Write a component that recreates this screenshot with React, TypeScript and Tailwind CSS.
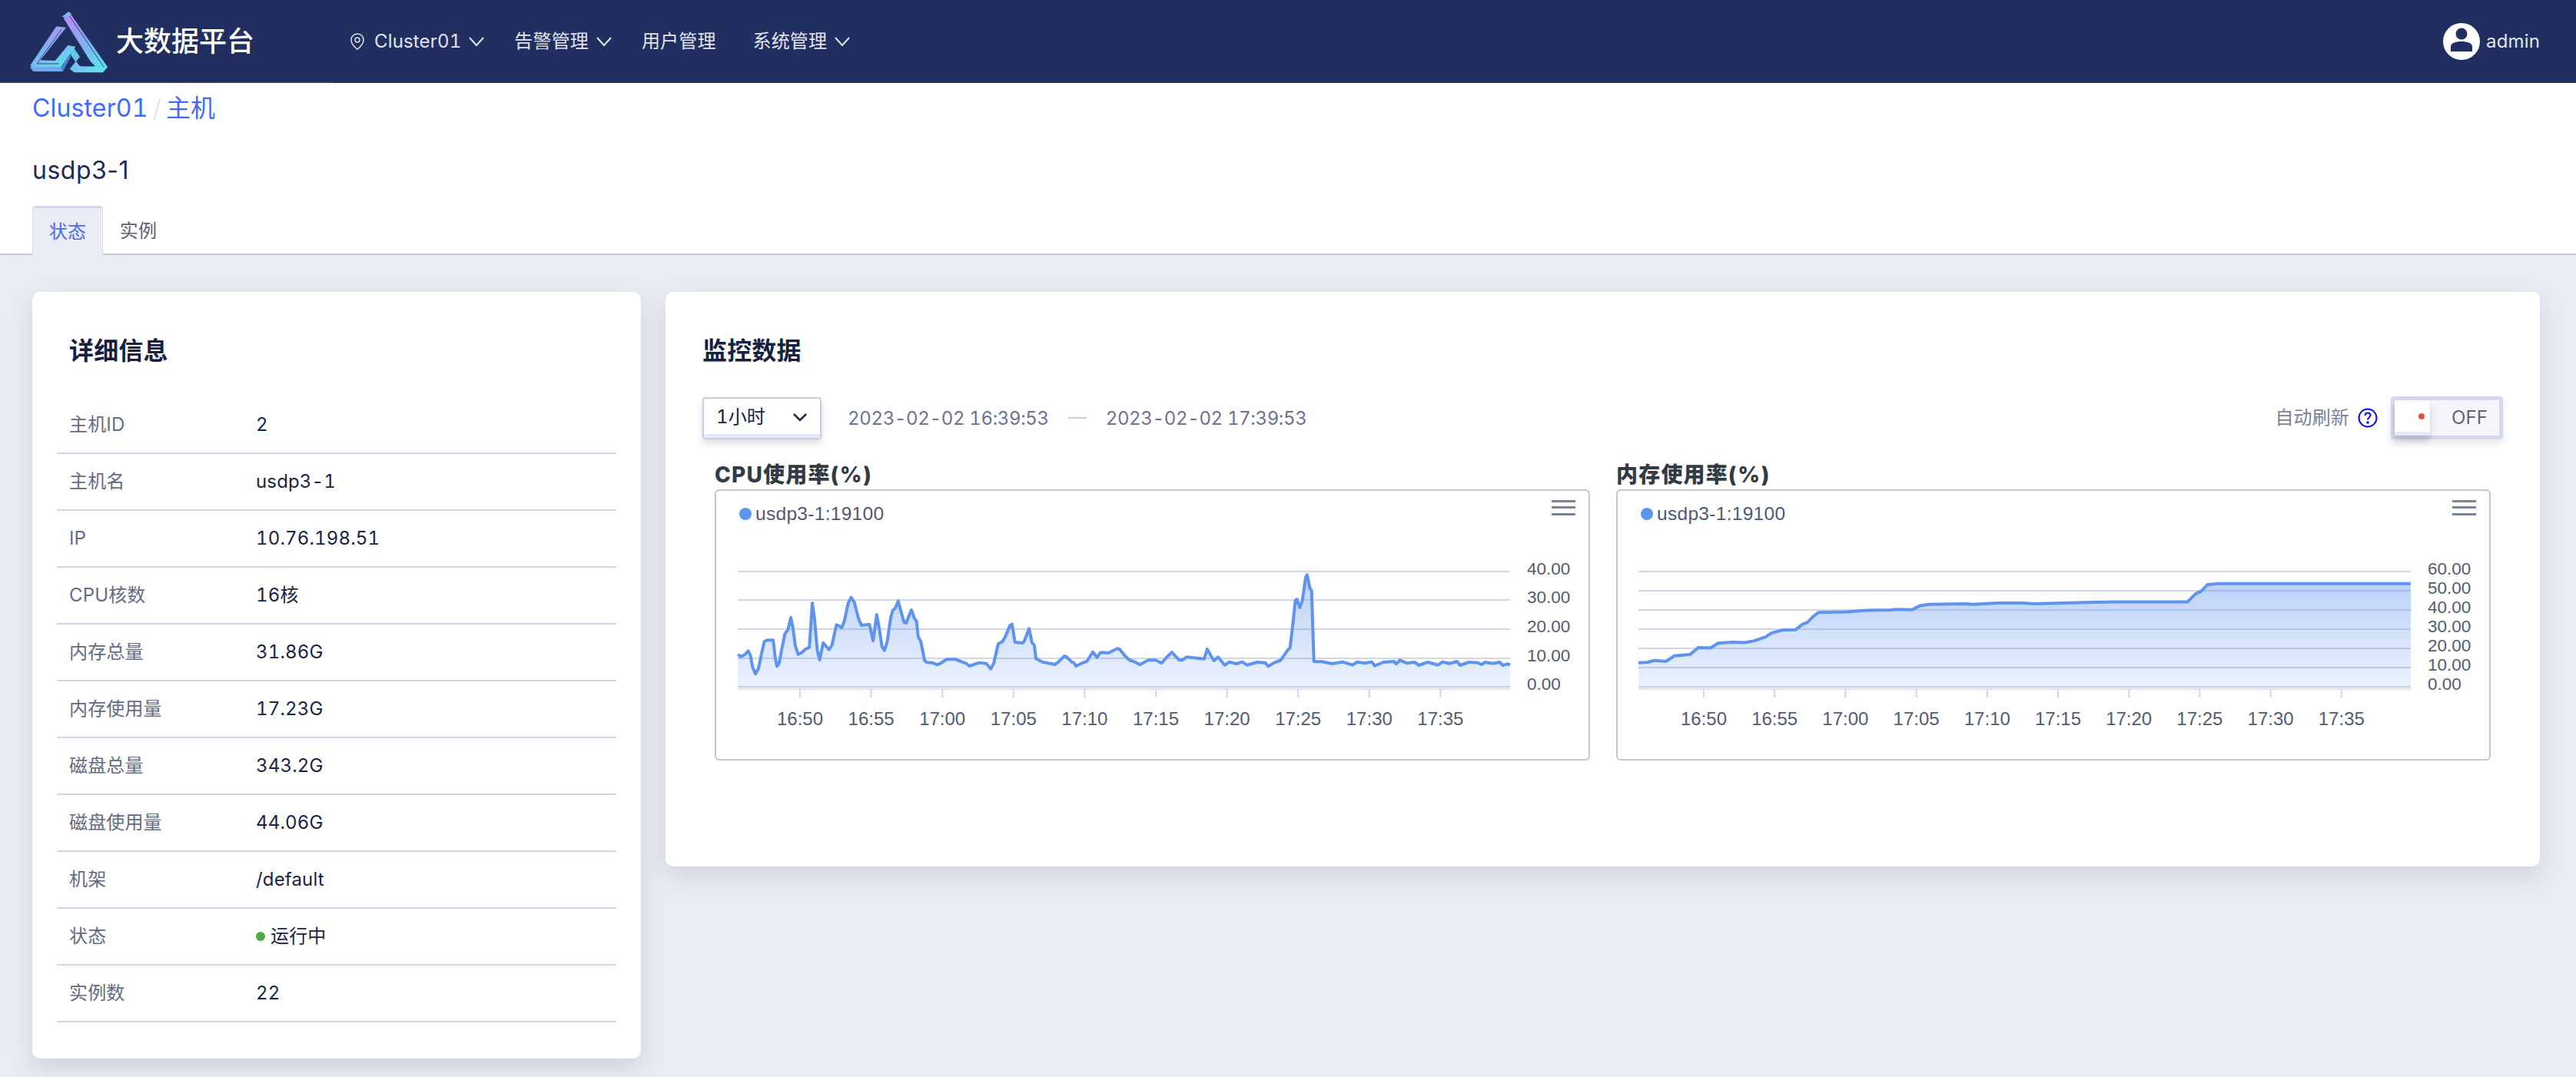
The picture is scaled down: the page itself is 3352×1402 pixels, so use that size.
import { MapPin } from "lucide-react";

type Pt = [number, number];

// line points read off the screenshot, page coordinates after the map
const cpuLeft: Pt[] = ([
  [105,575],[115,585],[130,575],[140,562],[148,580],[155,625],[165,652],[175,630],[185,575],[195,525],[205,520],[225,520],[232,590],[238,622],[245,610],[255,550],[265,495],[275,480],[285,432],[292,470],[300,540],[310,575],[320,570],[335,555],[348,548],[358,375],[365,430],[375,560],[383,597],[395,530],[415,557],[425,540],[440,460],[450,465],[458,472],[467,445],[480,375],[490,353],[500,370],[515,435],[525,462],[552,458],[565,522],[577,420],[585,470],[595,545],[603,560],[612,530],[625,430],[632,403],[640,395],[650,367],[660,410],[670,450],[677,453],[695,402],[705,435],[712,445],[718,507],[727,525],[740,600],[747,607],[765,608],[782,616],[795,610],[815,595],[845,595],[880,610],[892,621],[925,608],[950,611],[965,632],[975,610],[990,535],[1005,525],[1015,505],[1030,462],[1037,458],[1047,528],[1072,531],[1078,525],[1095,475],[1105,530],[1113,540],[1118,592],[1140,605],[1183,615],[1195,605],[1215,582],[1222,585],[1240,605],[1247,608],[1255,621],[1275,610],[1292,602],[1312,566],[1326,587],[1338,568],[1365,570],[1395,553],[1403,555],[1420,580],[1435,597],[1455,605],[1472,616],[1500,598],
] as Pt[]).map(([x, y]) => [920 + x / 2.613, 660 + y / 3]);

const cpuRight: Pt[] = ([
  [10,598],[30,610],[45,590],[65,567],[75,580],[90,597],[100,598],[115,586],[175,593],[185,555],[195,575],[208,600],[222,586],[245,618],[260,605],[285,612],[305,605],[320,617],[355,606],[382,608],[393,622],[415,607],[435,598],[458,560],[467,550],[475,470],[485,365],[490,360],[500,392],[508,370],[520,275],[525,265],[535,320],[540,325],[548,603],[575,604],[610,612],[645,605],[680,617],[695,605],[720,610],[745,605],[755,620],[785,606],[820,603],[828,613],[840,598],[865,610],[890,606],[905,618],[935,606],[970,617],[985,605],[1010,611],[1035,603],[1045,618],[1075,606],[1105,608],[1118,615],[1130,606],[1155,611],[1180,606],[1190,618],[1205,613],[1215,616],
] as Pt[]).map(([x, y]) => [1500 + x / 2.613, 660 + y / 3]);

const memLine: Pt[] = ([
  [64,913],[78,912],[90,906],[108,909],[122,891],[147,887],[160,865],[180,866],[192,851],[215,848],[235,849],[250,843],[268,831],[278,818],[295,809],[316,808],[328,790],[335,785],[345,765],[353,753],[400,751],[430,746],[470,745],[478,743],[503,744],[516,731],[530,727],[590,725],[600,727],[640,723],[680,723],[700,725],[780,721],[830,719],[945,719],[958,693],[967,685],[977,664],[995,661],[1303,661],
] as Pt[]).map(([x, y]) => [2080 + x / 1.233, 490 + y / 2.45]);

const times = ["16:50","16:55","17:00","17:05","17:10","17:15","17:20","17:25","17:30","17:35"];

const details = [
  ["主机ID", "2"],
  ["主机名", "usdp3-1"],
  ["IP", "10.76.198.51"],
  ["CPU核数", "16核"],
  ["内存总量", "31.86G"],
  ["内存使用量", "17.23G"],
  ["磁盘总量", "343.2G"],
  ["磁盘使用量", "44.06G"],
  ["机架", "/default"],
  ["状态", "运行中"],
  ["实例数", "22"],
];

function Chevron() {
  return (
    <svg width="22" height="14" viewBox="0 0 22 14" fill="none" stroke="#e4e6f0" strokeWidth="2">
      <polyline points="2,2 11,12 20,2" />
    </svg>
  );
}

function Logo() {
  return (
    <svg width="120" height="90" viewBox="0 0 360 270">
      <defs>
        <linearGradient id="logoGrad" x1="0.2" y1="0" x2="0.85" y2="1">
          <stop offset="0" stopColor="#b78cf4" />
          <stop offset="0.5" stopColor="#7eb2f2" />
          <stop offset="1" stopColor="#5de6ee" />
        </linearGradient>
      </defs>
      <polygon points="152,38 178,18 190,28 165,42" fill="#6fc0ee" />
      <polygon points="158,44 185,27 330,235 312,256 200,256 182,242 207,212 222,232 275,232" fill="url(#logoGrad)" />
      <polygon points="28,228 130,76 168,80 68,208 125,210 175,150 205,155 148,235 35,235" fill="url(#logoGrad)" />
      <polygon points="26,234 148,234 156,252 40,252" fill="#74a6ec" />
      <polygon points="148,234 182,185 187,193 156,252" fill="#3f87c4" />
      <polygon points="195,155 222,195 205,215 185,185" fill="#5ec9ee" />
      <polygon points="222,212 262,212 282,232 235,232" fill="#1f2e5e" />
      <line x1="182" y1="36" x2="316" y2="236" stroke="#1f2e5e" strokeWidth="2.5" />
      <line x1="150" y1="88" x2="54" y2="222" stroke="#1f2e5e" strokeWidth="2.5" />
      <line x1="54" y1="222" x2="140" y2="222" stroke="#1f2e5e" strokeWidth="2.5" />
    </svg>
  );
}

function NavItem({ label, arrow = true }: { label: string; arrow?: boolean }) {
  return (
    <div className="flex items-center gap-[9px] text-[24px] text-[#e1e3ee]">
      <span>{label}</span>
      {arrow && <Chevron />}
    </div>
  );
}

function path(points: Pt[]) {
  return points.map(([x, y], i) => `${i ? "L" : "M"}${x.toFixed(1)} ${y.toFixed(1)}`).join(" ");
}

function ChartPlot(props: {
  id: string;
  x0: number;
  x1: number;
  left: number;
  points: Pt[];
  grid: number[];
  yLabels: string[];
  labelX: number;
  firstTick: number;
  tickStep: number;
}) {
  const { id, x0, x1, left, points, grid, yLabels, labelX, firstTick, tickStep } = props;
  const area = `${path(points)} L${x1} ${points[points.length - 1][1]} L${x1} 896 L${x0} 896 Z`;
  return (
    <svg width={left} height="287" viewBox={`${x0 - (id === "cpu" ? 28 : 27)} 700 ${left} 287`} className="block">
      <defs>
        <linearGradient id={id} x1="0" y1="0" x2="0" y2="1">
          <stop offset="0" stopColor="#5f94ee" stopOpacity="0.42" />
          <stop offset="1" stopColor="#5f94ee" stopOpacity="0.12" />
        </linearGradient>
      </defs>
      {grid.map((y) => (
        <line key={y} x1={x0} x2={x1} y1={y} y2={y} stroke="#d3d6e8" strokeWidth="2" />
      ))}
      <line x1={x0} x2={x1} y1="897" y2="897" stroke="#dfe2ee" strokeWidth="2" />
      <path d={area} fill={`url(#${id})`} />
      <path d={path(points)} fill="none" stroke="#5f94ee" strokeWidth="4" strokeLinejoin="round" />
      {times.map((t, i) => {
        const x = firstTick + tickStep * i;
        return (
          <g key={t}>
            <line x1={x} x2={x} y1="897" y2="908" stroke="#d3d6e8" strokeWidth="2" />
            <text x={x} y="944" textAnchor="middle" fontFamily="'Liberation Sans', sans-serif" fontSize="24" letterSpacing="0" fill="#535b70">
              {t}
            </text>
          </g>
        );
      })}
      {yLabels.map((label, i) => (
        <text key={label} x={labelX} y={grid[i] + 4} fontFamily="'Liberation Sans', sans-serif" fontSize="22.5" letterSpacing="0" fill="#535b70">
          {label}
        </text>
      ))}
    </svg>
  );
}

function ChartBox({ title, children }: { title: string; children: React.ReactNode }) {
  return (
    <div>
      <div className="h-[37px] text-[28px] leading-[37px] font-extrabold tracking-[1.2px] text-[#333a45]">{title}</div>
      <div className="h-[353px] rounded-[6px] border-2 border-[#c4c6cc] bg-white">
        <div className="flex h-[61px] items-start justify-between pt-[12px] pr-[17px] pl-[30px]">
          <div className="flex h-[36px] items-center gap-[5px] font-['Liberation_Sans',sans-serif] text-[24.5px] tracking-[0.3px] text-[#4f5870]">
            <span className="h-[16px] w-[16px] rounded-full bg-[#5f94ee]" />
            usdp3-1:19100
          </div>
          <svg width="31" height="20" viewBox="0 0 31 20" fill="#78849a">
            <rect y="0" width="31" height="3" />
            <rect y="8" width="31" height="3" />
            <rect y="17" width="31" height="3" />
          </svg>
        </div>
        {children}
      </div>
    </div>
  );
}

export default function App() {
  return (
    <div className="min-h-screen bg-[#eaecf4] font-['Inter','Noto_Sans_CJK_SC',sans-serif] tracking-[0.15px] tabular-nums">
      <header className="relative flex h-[108px] items-center bg-[#212f60]">
        <div className="absolute bottom-0 left-0 h-[2px] w-[434px] bg-[#2f3d6e]" />
        <div className="ml-[30px] flex items-center">
          <Logo />
          <span className="ml-[1px] text-[36px] font-medium tracking-normal text-white">大数据平台</span>
        </div>
        <nav className="ml-[122px] flex items-center gap-[38px]">
          <div className="flex items-center gap-[10px] text-[#e1e3ee]">
            <MapPin size={24} strokeWidth={1.5} />
            <NavItem label="Cluster01" />
          </div>
          <NavItem label="告警管理" />
          <NavItem label="用户管理" arrow={false} />
          <div className="ml-[10px]">
            <NavItem label="系统管理" />
          </div>
        </nav>
        <div className="mr-[47px] ml-auto flex items-center gap-[8px]">
          <svg width="48" height="48" viewBox="0 0 48 48">
            <circle cx="24" cy="24" r="24" fill="#fff" />
            <circle cx="24" cy="14" r="7.5" fill="#212f60" />
            <path d="M10 37 V31 C10 26 16 24 24 24 C32 24 38 26 38 31 V37 Z" fill="#212f60" />
          </svg>
          <span className="text-[24px] text-[#e1e3ee]">admin</span>
        </div>
      </header>

      <section className="bg-white">
        <div className="flex h-[64px] items-center gap-[6px] pt-[2px] pl-[42px] text-[32px] text-[#3d6bff]">
          <span>Cluster01</span>
          <span className="font-light text-[#dfe1ea]">/</span>
          <span>主机</span>
        </div>
        <div className="mt-[26px] flex h-[48px] items-center pl-[42px] text-[32px] tracking-[0.5px] text-[#1f2a55] normal-nums">usdp3-1</div>
        <div className="mt-[22px] flex h-[64px] border-b-2 border-[#c6cbdc] pl-[42px] text-[24px]">
          <div className="-mb-[2px] flex h-[64px] w-[92px] items-center justify-center rounded-t-[4px] border-x border-t-[3px] border-[#d3d7e6] bg-[#e9ebf5] text-[#4a6cf0]">
            状态
          </div>
          <div className="flex w-[92px] items-center justify-center pt-[3px] text-[#5a6378]">实例</div>
        </div>
      </section>

      <main className="flex items-start gap-[32px] pt-[48px] pr-[47px] pb-[24px] pl-[42px]">
        <aside className="w-[792px] shrink-0 rounded-[10px] bg-white px-[32px] pt-[53px] pb-[47px] shadow-[0_12px_30px_rgba(60,70,110,0.16)]">
          <h2 className="mb-[36px] h-[48px] pl-[16px] text-[32px] leading-[48px] font-bold text-[#16213f]">详细信息</h2>
          {details.map(([label, value]) => (
            <div key={label} className="flex h-[74px] items-center border-b-2 border-[#d3d6e8] pl-[16px] text-[24px]">
              <span className="w-[243px] text-[#636b85]">{label}</span>
              <span className="flex items-center gap-[7px] text-[#1a2444]">
                {label === "状态" && <span className="h-[12px] w-[12px] rounded-full bg-[#4caf45]" />}
                {value}
              </span>
            </div>
          ))}
        </aside>

        <section className="h-[748px] flex-1 rounded-[10px] bg-white px-[48px] pt-[53px] shadow-[0_12px_30px_rgba(60,70,110,0.16)]">
          <h2 className="mb-[35px] h-[48px] text-[32px] leading-[48px] font-bold text-[#16213f]">监控数据</h2>
          <div className="flex h-[56px] items-center text-[24px]">
            <div className="h-[55px] w-[155px] rounded-[4px] border-2 border-[#c8cde0] bg-white shadow-[0_6px_10px_rgba(60,70,110,0.18)]">
              <div className="flex h-full items-center justify-between border-b-[5px] border-[#e6eafb] pt-[3px] pr-[16px] pl-[16px] text-[#16213f]">
                <span>1小时</span>
                <svg width="20" height="12" viewBox="0 0 20 12" fill="none" stroke="#1d2745" strokeWidth="2.5">
                  <polyline points="2,2 10,10 18,2" />
                </svg>
              </div>
            </div>
            <span className="ml-[34px] pt-[2px] tracking-[-0.35px] text-[#6b7390]">2023-02-02 16:39:53</span>
            <span className="mx-[25px] h-[2px] w-[24px] bg-[#c6cbdc]" />
            <span className="pt-[2px] tracking-[-0.35px] text-[#6b7390]">2023-02-02 17:39:53</span>
            <span className="ml-auto text-[#7a8299]">自动刷新</span>
            <svg width="26" height="26" viewBox="0 0 26 26" fill="none" stroke="#0a0af0" strokeWidth="2" className="mr-[17px] ml-[11px]">
              <circle cx="13" cy="13" r="11.5" />
              <path d="M9.5 10 C9.5 7.5 11 6.5 13 6.5 C15 6.5 16.5 7.8 16.5 9.6 C16.5 12 13 12.4 13 15.5" />
              <circle cx="13" cy="19" r="0.8" fill="#0a0af0" />
            </svg>
            <div className="flex h-[56px] w-[146px] rounded-[4px] border-[5px] border-[#d5d8ea] bg-[#f5f5fb] shadow-[0_6px_10px_rgba(60,70,110,0.12)]">
              <div className="flex h-full w-[46px] items-center justify-end rounded-[3px] border-b-[5px] border-[#e5e9fa] bg-white pr-[7px] shadow-[0_6px_8px_rgba(60,70,110,0.25)]">
                <span className="h-[8px] w-[8px] rounded-full bg-[#e2513b]" />
              </div>
              <span className="ml-[28px] flex items-center text-[#5b647c]">OFF</span>
            </div>
          </div>

          <div className="mt-[28px] ml-[16px] grid grid-cols-[1139px_1138px] gap-[34px]">
            <ChartBox title="CPU使用率(%)">
              <ChartPlot
                id="cpu"
                x0={960}
                x1={1965}
                left={1134}
                points={[...cpuLeft, ...cpuRight]}
                grid={[744, 781, 819, 857, 894]}
                yLabels={["40.00", "30.00", "20.00", "10.00", "0.00"]}
                labelX={1987}
                firstTick={1041}
                tickStep={92.6}
              />
            </ChartBox>
            <ChartBox title="内存使用率(%)">
              <ChartPlot
                id="mem"
                x0={2132}
                x1={3137}
                left={1133}
                points={memLine}
                grid={[744, 769, 794, 819, 844, 869, 894]}
                yLabels={["60.00", "50.00", "40.00", "30.00", "20.00", "10.00", "0.00"]}
                labelX={3159}
                firstTick={2217}
                tickStep={92.2}
              />
            </ChartBox>
          </div>
        </section>
      </main>
    </div>
  );
}
